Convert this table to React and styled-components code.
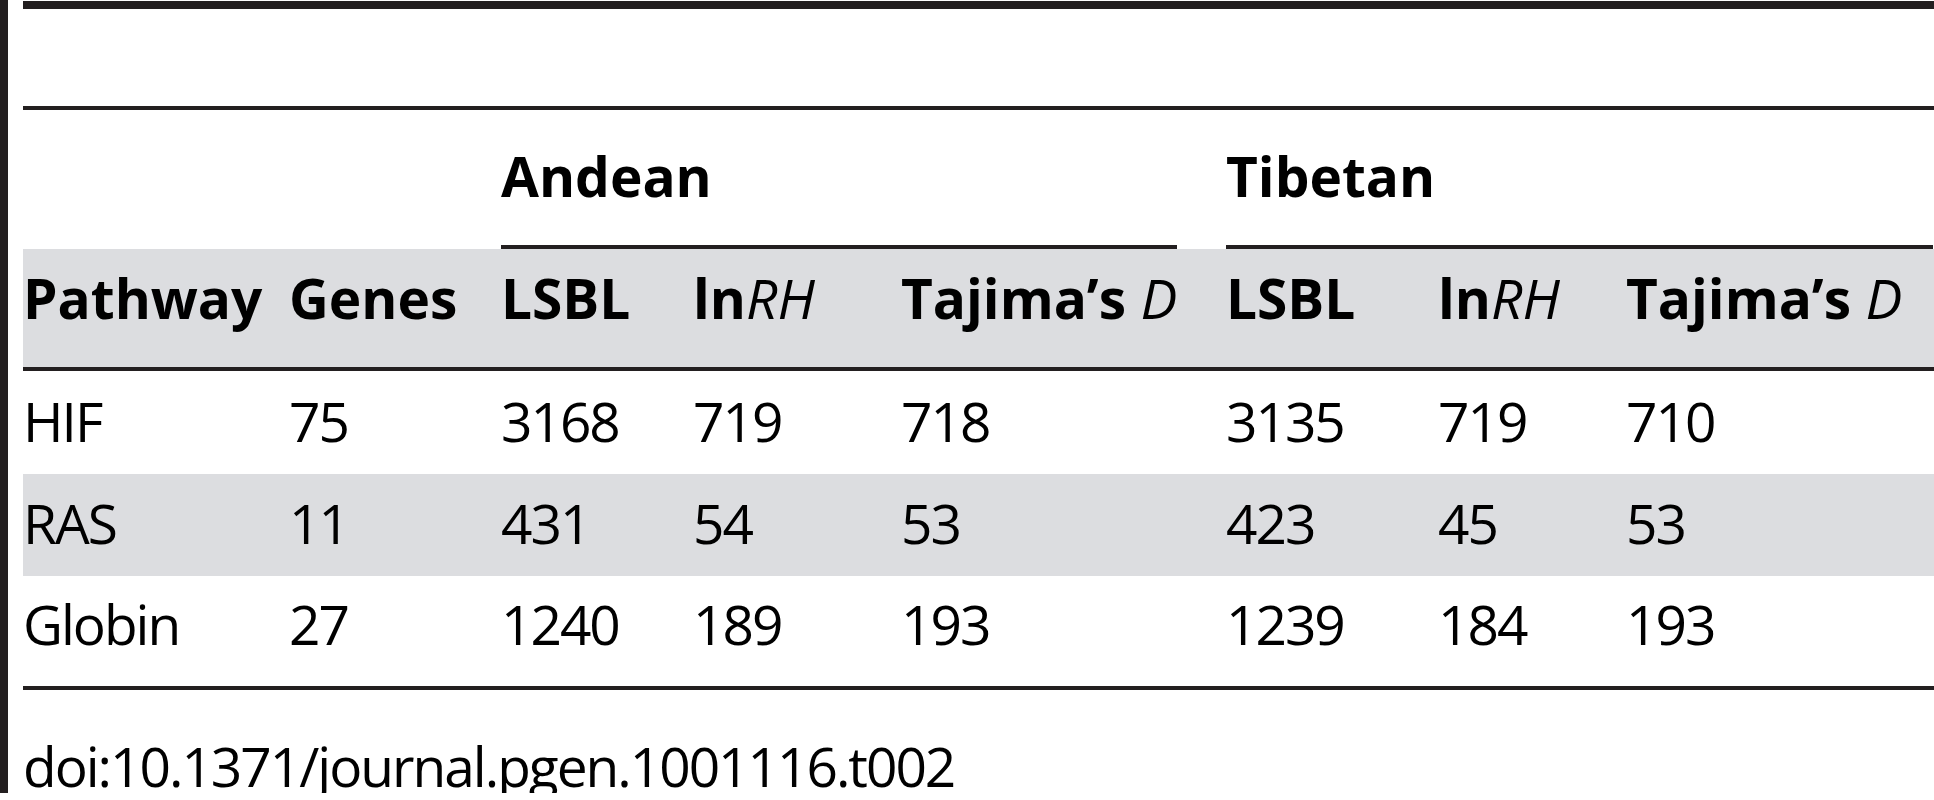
import React from "react";
import styled, { createGlobalStyle } from "styled-components";

const GlobalStyle = createGlobalStyle`
  html, body {
    margin: 0;
    padding: 0;
    background: #ffffff;
  }
  body {
    font-family: "Open Sans", "Liberation Sans", sans-serif;
    color: #000000;
  }
`;

const COLUMNS = "266px 212px 192px 208px 325px 212px 188px 307px";
const RULE = "#231f20";
const SHADE = "#dcdde0";

const Page = styled.div`
  display: flex;
  width: 1934px;
`;

const SideBar = styled.div`
  width: 8px;
  flex: none;
  background: ${RULE};
`;

const Content = styled.div`
  flex: 1;
  margin-left: 15px;
  padding-top: 1px;
  display: flex;
  flex-direction: column;
`;

const Rule = styled.div`
  height: ${(p) => p.$size || 4}px;
  background: ${RULE};
`;

const Caption = styled.div`
  height: 97px;
`;

const Row = styled.div`
  display: grid;
  grid-template-columns: ${COLUMNS};
  height: ${(p) => p.$height}px;
  background: ${(p) => (p.$shade ? SHADE : "transparent")};
  box-sizing: border-box;
  padding-top: ${(p) => p.$pad}px;
`;

const Cell = styled.div`
  font-size: 55px;
  line-height: 55px;
  font-weight: ${(p) => (p.$bold ? 700 : 400)};
  letter-spacing: ${(p) => (p.$bold ? "0px" : "-2px")};
  white-space: nowrap;
  grid-column: ${(p) => p.$span ? `span ${p.$span}` : "auto"};
`;

const Group = styled.div`
  grid-column: span 3;
  display: flex;
  flex-direction: column;
  height: 100%;
`;

const GroupLabel = styled.div`
  font-size: 55px;
  line-height: 55px;
  font-weight: 700;
  padding-top: 38px;
  flex: 1;
`;

const GroupLine = styled.div`
  height: 4px;
  background: ${RULE};
  margin-right: ${(p) => p.$gap || 0}px;
`;

const Ital = styled.span`
  font-style: italic;
  font-weight: 400;
`;

const Doi = styled.div`
  font-size: 55px;
  line-height: 55px;
  letter-spacing: -2px;
  padding-top: 48px;
`;

const headers = [
  "Pathway",
  "Genes",
  "LSBL",
  <>ln<Ital>RH</Ital></>,
  <>Tajima’s <Ital>D</Ital></>,
  "LSBL",
  <>ln<Ital>RH</Ital></>,
  <>Tajima’s <Ital>D</Ital></>,
];

const rows = [
  { cells: ["HIF", "75", "3168", "719", "718", "3135", "719", "710"], height: 103, pad: 22 },
  { cells: ["RAS", "11", "431", "54", "53", "423", "45", "53"], height: 102, pad: 21, shade: true },
  { cells: ["Globin", "27", "1240", "189", "193", "1239", "184", "193"], height: 110, pad: 20 },
];

export default function App() {
  return (
    <>
      <GlobalStyle />
      <Page>
        <SideBar />
        <Content>
          <Rule $size={8} />
          <Caption />
          <Rule />
          <Row $height={139} $pad={0}>
            <Cell $span={2} />
            <Group>
              <GroupLabel>Andean</GroupLabel>
              <GroupLine $gap={49} />
            </Group>
            <Group>
              <GroupLabel>Tibetan</GroupLabel>
              <GroupLine />
            </Group>
          </Row>
          <Row $height={118} $pad={21} $shade>
            {headers.map((h, i) => (
              <Cell key={`head_${i}`} $bold>{h}</Cell>
            ))}
          </Row>
          <Rule />
          {rows.map((r, i) => (
            <Row key={`row_${i}`} $height={r.height} $pad={r.pad} $shade={r.shade}>
              {r.cells.map((c, j) => (
                <Cell key={`cell_${i}_${j}`}>{c}</Cell>
              ))}
            </Row>
          ))}
          <Rule />
          <Doi>doi:10.1371/journal.pgen.1001116.t002</Doi>
        </Content>
      </Page>
    </>
  );
}
